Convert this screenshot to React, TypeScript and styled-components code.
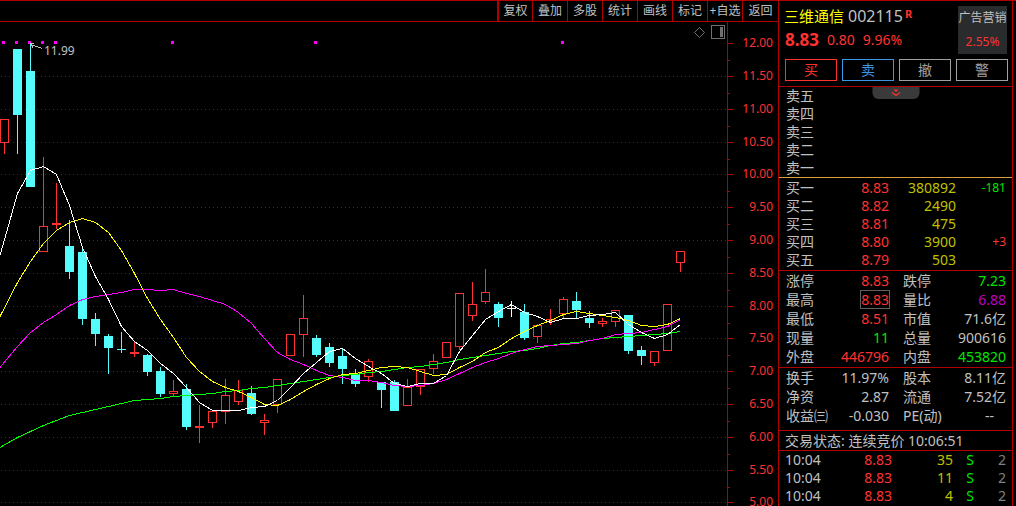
import React from "react";
import styled, { createGlobalStyle } from "styled-components";

const color = {
  line: "#b00000",
  grid: "#a00000",
  text: "#c0c0c0",
  dim: "#808080",
  up: "#ff3232",
  down: "#00e600",
  volume: "#c0c000",
  name: "#ffff00",
  ratio: "#c000c0",
  cyan: "#54fcfc",
  blue: "#3c96e6",
  divider: "#dca03c",
};

const GlobalStyle = createGlobalStyle`
  * { box-sizing: border-box; }
  body {
    margin: 0;
    background: #000;
    color: ${color.text};
    font-family: "Noto Sans", "Noto Sans CJK SC", sans-serif;
    font-size: 14px;
  }
  button { font-family: inherit; cursor: pointer; }
`;

const Page = styled.div`
  display: grid;
  grid-template-columns: minmax(0, 1fr) 238px;
  min-height: 100vh;
  border-top: 1px solid ${color.line};
`;

const ChartColumn = styled.main`
  display: flex;
  flex-direction: column;
`;

const Toolbar = styled.nav`
  display: flex;
  justify-content: flex-end;
  height: 21px;
  border-bottom: 1px solid ${color.line};
`;

const ToolButton = styled.button<{ $first?: boolean }>`
  width: 35px;
  padding: 0;
  border: 0;
  border-left: ${(p) => (p.$first ? 2 : 1)}px solid ${color.line};
  background: none;
  color: ${color.text};
  font-size: 12px;
  line-height: 20px;
  white-space: nowrap;

  &:last-child {
    width: 36px;
  }
`;

const ChartArea = styled.section`
  position: relative;
`;

const ChartSvg = styled.svg`
  display: block;
  width: 100%;
  height: auto;
`;

const ChartText = styled.text`
  font-family: "Noto Sans", sans-serif;
  font-size: 12px;
`;

const ChartTools = styled.div`
  position: absolute;
  top: 3px;
  right: 53px;
  display: flex;
  align-items: center;
  gap: 6px;
`;

const IconButton = styled.button`
  display: block;
  padding: 0;
  border: 0;
  background: none;
  line-height: 0;
`;

const Panel = styled.aside`
  margin-right: 3px;
  border-left: 1px solid ${color.line};
  border-right: 1px solid ${color.line};
`;

const Header = styled.header`
  display: flex;
  flex-direction: column;
  gap: 5px;
  padding: 5px 4px 5px 6px;
  border-bottom: 1px solid ${color.line};
`;

const HeaderTop = styled.div`
  display: flex;
  justify-content: space-between;
  padding-right: 1px;
  margin-left: -1px;
`;

const Title = styled.h1`
  display: flex;
  margin: 0;
  font-size: 16px;
  font-weight: 400;
  line-height: 20px;
`;

const StockName = styled.span`
  margin-right: 4px;
  color: ${color.name};
  font-size: 15px;
`;

const Flag = styled.sup`
  margin-left: 2px;
  color: ${color.up};
  font-size: 11px;
  font-weight: 700;
  line-height: 16px;
`;

const PriceLine = styled.div`
  display: flex;
  gap: 8px;
  padding-left: 1px;
  color: ${color.up};
  line-height: 28px;
`;

const LastPrice = styled.strong`
  font-size: 17px;
`;

const Sector = styled.a`
  display: block;
  width: 49px;
  background: #2a2b2d;
  color: ${color.text};
  font-size: 12px;
  line-height: 24px;
  text-align: center;
  text-decoration: none;
  white-space: nowrap;
`;

const SectorChange = styled.span`
  display: block;
  color: ${color.up};
`;

const Actions = styled.div`
  display: grid;
  grid-template-columns: repeat(4, 1fr);
  gap: 5px;
`;

const ActionButton = styled.button<{ $color: string }>`
  height: 22px;
  padding: 0;
  border: 1px solid ${(p) => p.$color};
  background: none;
  color: ${(p) => p.$color};
  font-size: 14px;
  line-height: 20px;
`;

const Block = styled.section<{ $line?: string; $top?: number; $bottom?: number }>`
  position: relative;
  padding-top: ${(p) => p.$top ?? 0}px;
  padding-bottom: ${(p) => p.$bottom ?? 0}px;
  border-bottom: ${(p) => (p.$line ? `1px solid ${p.$line}` : "0")};
`;

const Drawer = styled.button`
  position: absolute;
  top: 0;
  left: 50%;
  transform: translateX(-50%);
  width: 47px;
  height: 12px;
  padding: 0;
  border: 0;
  border-radius: 0 0 6px 6px;
  background: #3a3a3a;
  line-height: 0;
`;

const DataTable = styled.table<{ $row: number }>`
  width: 100%;
  table-layout: fixed;
  border-collapse: collapse;

  th,
  td {
    height: ${(p) => p.$row}px;
    padding: 0;
    line-height: ${(p) => p.$row}px;
    white-space: nowrap;
  }
`;

const Label = styled.th<{ $indent: number }>`
  && {
    padding-left: ${(p) => p.$indent}px;
  }
  font-weight: 400;
  text-align: left;
`;

const Value = styled.td<{ $color?: string; $small?: boolean; $inset?: number }>`
  && {
    padding-right: ${(p) => p.$inset ?? 0}px;
  }
  color: ${(p) => p.$color ?? color.text};
  font-size: ${(p) => (p.$small ? 12 : 14)}px;
  text-align: right;
`;

const Marked = styled.span`
  display: inline-block;
  line-height: 17px;
  box-shadow: 0 0 0 1px #606060;
`;

const Status = styled.p`
  margin: 0;
  padding-left: 6px;
  line-height: 19px;
  border-bottom: 1px solid ${color.line};
`;

/* Candle: [kind, high, body top, body bottom, low] on the vertical scale of the plot */
type Kind = "up" | "down" | "flat";
type Candle = [Kind, number, number, number, number];

const candles: Candle[] = [
  ["up", 119, 119, 143, 154],
  ["down", 49, 49, 115, 154],
  ["down", 43, 71, 187, 187],
  ["up", 157, 226, 252, 252],
  ["up", 183, 223, 225, 229],
  ["down", 220, 246, 272, 279],
  ["down", 248, 252, 319, 325],
  ["down", 313, 319, 334, 346],
  ["down", 334, 336, 348, 374],
  ["down", 332, 349, 350, 353],
  ["up", 342, 352, 354, 357],
  ["down", 354, 355, 372, 376],
  ["down", 367, 371, 394, 397],
  ["up", 380, 391, 394, 396],
  ["down", 384, 389, 427, 430],
  ["up", 405, 426, 428, 443],
  ["up", 411, 411, 423, 428],
  ["up", 379, 395, 412, 424],
  ["up", 380, 390, 402, 405],
  ["down", 386, 393, 414, 415],
  ["up", 414, 420, 423, 435],
  ["up", 379, 379, 405, 413],
  ["up", 334, 334, 356, 356],
  ["up", 295, 318, 335, 357],
  ["down", 335, 338, 355, 357],
  ["down", 343, 347, 363, 367],
  ["down", 349, 356, 369, 384],
  ["down", 369, 374, 384, 387],
  ["up", 359, 361, 377, 382],
  ["down", 382, 382, 390, 408],
  ["down", 380, 382, 411, 411],
  ["up", 379, 387, 406, 406],
  ["up", 369, 369, 387, 395],
  ["up", 354, 361, 369, 374],
  ["up", 342, 342, 358, 358],
  ["up", 293, 293, 347, 350],
  ["up", 282, 304, 316, 321],
  ["up", 269, 292, 302, 304],
  ["down", 302, 304, 318, 327],
  ["flat", 301, 308, 309, 317],
  ["down", 304, 312, 338, 340],
  ["up", 324, 325, 337, 343],
  ["up", 309, 319, 322, 325],
  ["up", 297, 299, 314, 318],
  ["down", 292, 301, 310, 318],
  ["down", 311, 318, 323, 328],
  ["up", 318, 321, 324, 327],
  ["up", 310, 310, 322, 327],
  ["down", 315, 315, 351, 354],
  ["down", 346, 350, 356, 365],
  ["up", 351, 351, 363, 366],
  ["up", 304, 304, 351, 351],
  ["up", 251, 251, 263, 272],
];

const candleColor: Record<Kind, string> = { up: color.up, down: color.cyan, flat: "#ffffff" };

/* Moving averages: the level at the left edge, then one level per candle from the second on */
const averages: { name: string; stroke: string; levels: number[] }[] = [
  {
    name: "MA60",
    stroke: "#00ff00",
    levels: [
      447, 437, 431, 425, 420, 415, 412, 409, 406, 403, 400, 399, 398, 396, 395, 394, 393, 391,
      390, 388, 387, 385, 383, 381, 379, 377, 375, 374, 372, 371, 369, 367, 366, 364, 362, 359,
      357, 355, 353, 351, 350, 348, 345, 343, 342, 340, 338, 337, 336, 335, 334, 333, 331,
    ],
  },
  {
    name: "MA20",
    stroke: "#ff00ff",
    levels: [
      367, 346, 332, 322, 314, 305, 299, 296, 294, 292, 289, 289, 290, 289, 293, 296, 300, 304,
      312, 323, 338, 352, 359, 364, 370, 375, 377, 380, 380, 382, 385, 386, 385, 383, 379, 373,
      367, 362, 358, 353, 349, 346, 345, 344, 343, 340, 338, 334, 333, 332, 329, 326, 319,
    ],
  },
  {
    name: "MA10",
    stroke: "#ffff00",
    levels: [
      316, 282, 261, 243, 230, 222, 218, 222, 232, 250, 273, 298, 319, 337, 357, 371, 381, 387,
      391, 397, 404, 405, 399, 391, 384, 378, 374, 373, 370, 367, 366, 367, 371, 375, 374, 367,
      361, 352, 347, 338, 331, 325, 320, 314, 311, 313, 315, 317, 320, 325, 326, 324, 318,
    ],
  },
  {
    name: "MA5",
    stroke: "#ffffff",
    levels: [
      255, 193, 170, 166, 174, 205, 247, 276, 299, 326, 341, 350, 363, 373, 387, 402, 410, 410,
      410, 407, 406, 400, 387, 373, 362, 351, 348, 358, 366, 373, 383, 386, 383, 383, 375, 351,
      335, 319, 311, 304, 312, 316, 322, 318, 318, 315, 314, 312, 324, 332, 338, 334, 324,
    ],
  },
];

const priceTicks: [string, number][] = [
  ["12.00", 43],
  ["11.50", 76],
  ["11.00", 109],
  ["10.50", 142],
  ["10.00", 174],
  ["9.50", 207],
  ["9.00", 240],
  ["8.50", 273],
  ["8.00", 306],
  ["7.50", 338],
  ["7.00", 371],
  ["6.50", 404],
  ["6.00", 437],
  ["5.50", 470],
  ["5.00", 502],
];

const eventMarks = [2, 15, 28, 41, 54, 171, 314, 561];

const centerOf = (index: number) => 4 + 13 * index;

function CandleShape({ candle, x }: { candle: Candle; x: number }) {
  const [kind, high, top, bottom, low] = candle;
  const paint = candleColor[kind];
  const hollow = kind === "up" && bottom - top > 2;
  return (
    <g>
      <rect x={x} y={high} width={1} height={low - high} fill={paint} />
      {hollow ? (
        <rect x={x - 3.5} y={top + 0.5} width={8} height={bottom - top - 1} fill="#000" stroke={paint} />
      ) : (
        <rect x={x - 4} y={top} width={9} height={bottom - top} fill={paint} />
      )}
    </g>
  );
}

function Chart() {
  return (
    <ChartArea>
      <ChartSvg viewBox="0 22 778 484" role="img" aria-label="日K线图">
        <g shapeRendering="crispEdges">
          {priceTicks.slice(1).map(([label, y]) => (
            <line key={label} x1={1} x2={727} y1={y + 0.5} y2={y + 0.5} stroke={color.grid} strokeDasharray="1 3" />
          ))}
          <rect x={727} y={22} width={1} height={484} fill={color.line} />
          {priceTicks.map(([label, y]) => (
            <g key={label} fill={color.line}>
              <rect x={728} y={y} width={5} height={1} />
              <rect x={728} y={y + 17} width={2} height={1} />
            </g>
          ))}
          {candles.map((candle, i) => (
            <CandleShape key={i} candle={candle} x={centerOf(i)} />
          ))}
          {averages.map(({ name, stroke, levels }) => (
            <polyline
              key={name}
              fill="none"
              stroke={stroke}
              points={levels.map((y, i) => `${i === 0 ? 0 : centerOf(i) + 0.5},${y + 0.5}`).join(" ")}
            />
          ))}
          {eventMarks.map((x) => (
            <rect key={x} x={x} y={41} width={3} height={3} fill="#ff00ff" />
          ))}
          <path d="M31 44.5L42 48.5M30 43.5H34M31 44.5L33 48" fill="none" stroke={color.text} />
        </g>
        <ChartText x={44} y={55} fill={color.text}>
          11.99
        </ChartText>
        {priceTicks.map(([label, y]) => (
          <ChartText key={label} x={773} y={y + 4} textAnchor="end" fill={color.up}>
            {label}
          </ChartText>
        ))}
      </ChartSvg>
      <ChartTools>
        <IconButton type="button" aria-label="标记点">
          <svg width="11" height="11" viewBox="0 0 11 11">
            <path d="M5.5 0.5L10.5 5.5L5.5 10.5L0.5 5.5Z" fill="none" stroke="#707070" />
          </svg>
        </IconButton>
        <IconButton type="button" aria-label="侧栏">
          <svg width="14" height="14" viewBox="0 0 14 14">
            <rect x="0.5" y="0.5" width="13" height="13" fill="none" stroke="#707070" />
            <rect x="9" y="2" width="3" height="10" fill="#707070" />
          </svg>
        </IconButton>
      </ChartTools>
    </ChartArea>
  );
}

const tools = ["复权", "叠加", "多股", "统计", "画线", "标记", "+自选", "返回"];

const actions: [string, string][] = [
  ["买", color.up],
  ["卖", color.blue],
  ["撤", "#a0a0a0"],
  ["警", "#a0a0a0"],
];

type Order = { label: string; price?: string; volume?: string; change?: string; tone?: string };

const asks: Order[] = ["卖五", "卖四", "卖三", "卖二", "卖一"].map((label) => ({ label }));

const bids: Order[] = [
  { label: "买一", price: "8.83", volume: "380892", change: "-181", tone: color.down },
  { label: "买二", price: "8.82", volume: "2490" },
  { label: "买三", price: "8.81", volume: "475" },
  { label: "买四", price: "8.80", volume: "3900", change: "+3", tone: color.up },
  { label: "买五", price: "8.79", volume: "503" },
];

function OrderTable({ orders }: { orders: Order[] }) {
  return (
    <DataTable $row={18}>
      <colgroup>
        <col style={{ width: 47 }} />
        <col style={{ width: 63 }} />
        <col style={{ width: 67 }} />
        <col />
      </colgroup>
      <tbody>
        {orders.map((o) => (
          <tr key={o.label}>
            <Label scope="row" $indent={7}>{o.label}</Label>
            <Value $color={color.up}>{o.price}</Value>
            <Value $color={color.volume}>{o.volume}</Value>
            <Value $color={o.tone} $small $inset={6}>{o.change}</Value>
          </tr>
        ))}
      </tbody>
    </DataTable>
  );
}

type Stat = { label: string; value: string; tone?: string; marked?: boolean; inset?: number };

const dayStats: [Stat, Stat][] = [
  [{ label: "涨停", value: "8.83", tone: color.up }, { label: "跌停", value: "7.23", tone: color.down }],
  [{ label: "最高", value: "8.83", tone: color.up, marked: true }, { label: "量比", value: "6.88", tone: color.ratio }],
  [{ label: "最低", value: "8.51", tone: color.up }, { label: "市值", value: "71.6亿" }],
  [{ label: "现量", value: "11", tone: color.down }, { label: "总量", value: "900616" }],
  [{ label: "外盘", value: "446796", tone: color.up }, { label: "内盘", value: "453820", tone: color.down }],
];

const companyStats: [Stat, Stat][] = [
  [{ label: "换手", value: "11.97%" }, { label: "股本", value: "8.11亿" }],
  [{ label: "净资", value: "2.87" }, { label: "流通", value: "7.52亿" }],
  [{ label: "收益㈢", value: "-0.030" }, { label: "PE(动)", value: "--", inset: 18 }],
];

function StatTable({ rows }: { rows: [Stat, Stat][] }) {
  return (
    <DataTable $row={19}>
      <colgroup>
        <col style={{ width: 51 }} />
        <col style={{ width: 59 }} />
        <col style={{ width: 60 }} />
        <col />
      </colgroup>
      <tbody>
        {rows.map(([left, right]) => (
          <tr key={left.label}>
            <Label scope="row" $indent={7}>{left.label}</Label>
            <Value $color={left.tone}>{left.marked ? <Marked>{left.value}</Marked> : left.value}</Value>
            <Label scope="row" $indent={14}>{right.label}</Label>
            <Value $color={right.tone} $inset={right.inset ?? 6}>{right.value}</Value>
          </tr>
        ))}
      </tbody>
    </DataTable>
  );
}

const trades = [
  { time: "10:04", price: "8.83", volume: "35", side: "S", count: "2" },
  { time: "10:04", price: "8.83", volume: "11", side: "S", count: "2" },
  { time: "10:04", price: "8.83", volume: "4", side: "S", count: "2" },
];

function TradeTable() {
  return (
    <DataTable $row={18}>
      <colgroup>
        <col style={{ width: 53 }} />
        <col style={{ width: 60 }} />
        <col style={{ width: 61 }} />
        <col style={{ width: 21 }} />
        <col />
      </colgroup>
      <tbody>
        {trades.map((t, i) => (
          <tr key={i}>
            <Label scope="row" $indent={6}>{t.time}</Label>
            <Value $color={color.up}>{t.price}</Value>
            <Value $color={color.volume}>{t.volume}</Value>
            <Value $color={color.down}>{t.side}</Value>
            <Value $color={color.dim} $inset={6}>{t.count}</Value>
          </tr>
        ))}
      </tbody>
    </DataTable>
  );
}

export default function App() {
  return (
    <>
      <GlobalStyle />
      <Page>
        <ChartColumn>
          <Toolbar>
            {tools.map((tool, i) => (
              <ToolButton key={tool} type="button" $first={i === 0}>
                {tool}
              </ToolButton>
            ))}
          </Toolbar>
          <Chart />
        </ChartColumn>
        <Panel>
          <Header>
            <HeaderTop>
              <div>
                <Title>
                  <StockName>三维通信</StockName>
                  002115
                  <Flag>R</Flag>
                </Title>
                <PriceLine>
                  <LastPrice>8.83</LastPrice>
                  <span>0.80</span>
                  <span>9.96%</span>
                </PriceLine>
              </div>
              <Sector href="#sector">
                广告营销
                <SectorChange>2.55%</SectorChange>
              </Sector>
            </HeaderTop>
            <Actions>
              {actions.map(([label, paint]) => (
                <ActionButton key={label} type="button" $color={paint}>
                  {label}
                </ActionButton>
              ))}
            </Actions>
          </Header>
          <Block $line={color.divider}>
            <OrderTable orders={asks} />
            <Drawer type="button" aria-label="展开">
              <svg width="9" height="8" viewBox="0 0 9 8">
                <path d="M3 0.5L4.5 2L6 0.5M0.5 3.5L4.5 6.5L8.5 3.5" fill="none" stroke={color.up} strokeWidth="1.3" />
              </svg>
            </Drawer>
          </Block>
          <Block $line={color.line} $top={1} $bottom={1}>
            <OrderTable orders={bids} />
          </Block>
          <Block $line={color.line} $bottom={1}>
            <StatTable rows={dayStats} />
          </Block>
          <Block $line={color.line} $bottom={5}>
            <StatTable rows={companyStats} />
          </Block>
          <Status>交易状态: 连续竞价 10:06:51</Status>
          <TradeTable />
        </Panel>
      </Page>
    </>
  );
}
